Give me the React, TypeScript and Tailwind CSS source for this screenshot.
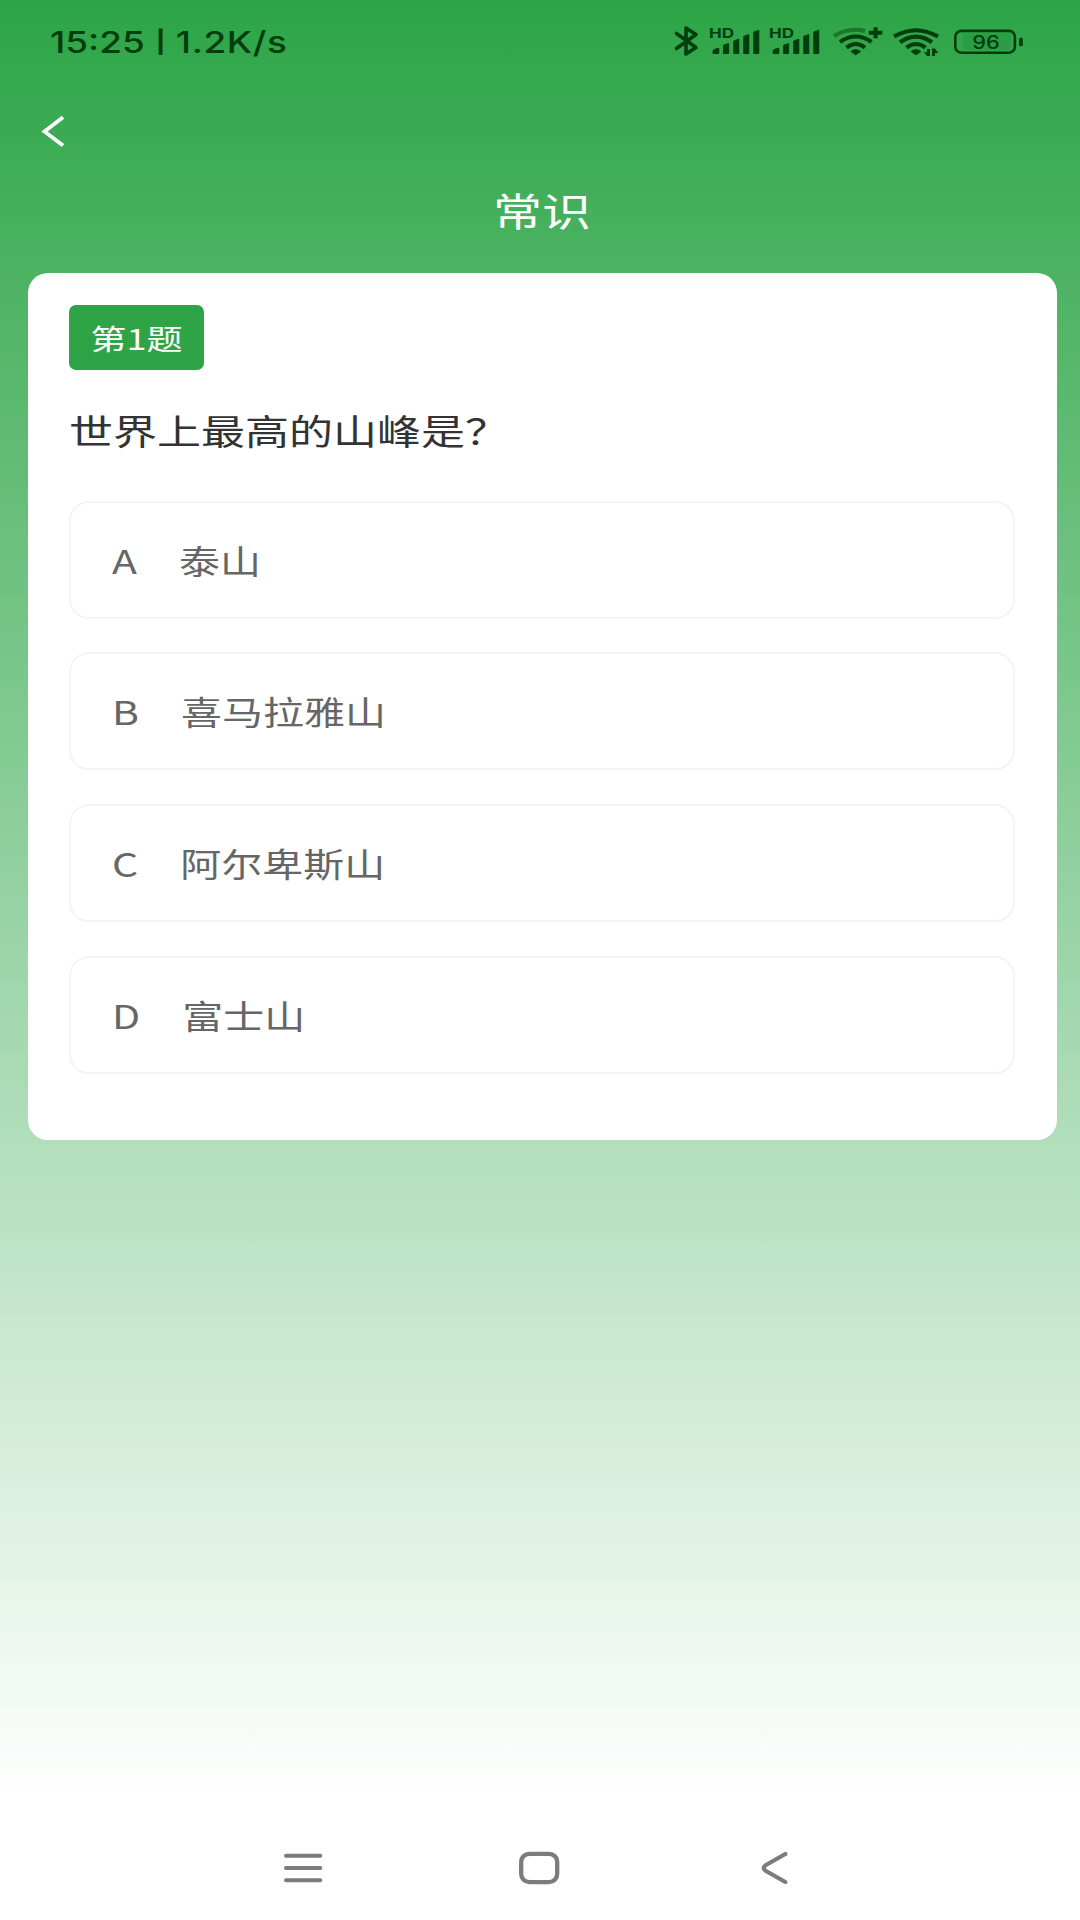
import React from 'react';

const options = [
  { key: 'A', label: '泰山' },
  { key: 'B', label: '喜马拉雅山' },
  { key: 'C', label: '阿尔卑斯山' },
  { key: 'D', label: '富士山' },
];

const BluetoothIcon: React.FC = () => (
  <svg width="32" height="40" viewBox="672 20 32 40" fill="none" stroke="currentColor" strokeWidth="3.6" strokeLinejoin="round" strokeLinecap="round">
    <path d="M676.5 33.5 L696 47.5 L686 54 V28 L696 34.5 L676.5 48.5" />
  </svg>
);

const SignalIcon: React.FC = () => (
  <svg width="60" height="40" viewBox="704 20 60 40" fill="currentColor" stroke="currentColor" strokeWidth="1" strokeLinejoin="round">
    <text x="709" y="38.4" fontSize="12.8" fontWeight="700" stroke="none" textLength="25" lengthAdjust="spacingAndGlyphs" fontFamily="Inter, sans-serif">HD</text>
    <path d="M713 50.8 L714.5 49.3 L718.8 48.3 V53.5 H713 Z" />
    <path d="M723.6 45.2 L728.6 43.6 V53.5 H723.6 Z" />
    <path d="M733.8 41 L738.8 39.2 V53.5 H733.8 Z" />
    <path d="M743.8 36.4 L748.8 34.6 V53.5 H743.8 Z" />
    <path d="M753.8 32 L758.8 30.3 V53.5 H753.8 Z" />
  </svg>
);

const WifiPlusIcon: React.FC = () => (
  <svg width="62" height="40" viewBox="826 20 62 40" fill="none" stroke="currentColor" strokeWidth="4.1">
    <path d="M834 36.3 Q848 26.8 865 31" opacity="0.45" />
    <path d="M840 42 Q855.8 31 871.5 42" />
    <path d="M846.5 47.6 Q855.8 40.4 865 47.6" />
    <path d="M855.8 55 L850.8 51.5 Q855.8 47.6 860.8 51.5 Z" fill="currentColor" strokeWidth="0.6" />
    <path d="M868.8 32.7 H882.3 M875.6 27.2 V38.2" />
  </svg>
);

const WifiDataIcon: React.FC = () => (
  <svg width="60" height="40" viewBox="888 20 60 40" fill="none" stroke="currentColor" strokeWidth="4.1">
    <path d="M894 36.6 Q916 23.8 938 36.6" />
    <path d="M900 42.2 Q916 31 932 42.2" />
    <path d="M906.5 47.6 Q916 40.4 925.5 47.6" />
    <path d="M916 55 L911 51.5 Q916 47.6 921 51.5 Z" fill="currentColor" strokeWidth="0.6" />
    <path d="M930 49 V56 H927 L923.8 52.2 H927 V49 Z M932 56 V48.5 H935 L938.3 53 H935 V56 Z" fill="currentColor" stroke="none" />
  </svg>
);

const BatteryIcon: React.FC = () => (
  <svg width="80" height="40" viewBox="948 20 80 40" fill="none">
    <rect x="963" y="33.5" width="48" height="16.5" rx="2" fill="currentColor" opacity="0.09" />
    <rect x="955.3" y="30.9" width="59.6" height="21.8" rx="6" stroke="currentColor" strokeWidth="2.6" />
    <rect x="1019" y="37.7" width="3.8" height="8.5" rx="1.5" fill="currentColor" />
    <text x="972.3" y="48.8" fontSize="18.5" fontWeight="500" fill="currentColor" textLength="27.5" lengthAdjust="spacingAndGlyphs" fontFamily="Inter, sans-serif">96</text>
  </svg>
);

const StatusBar: React.FC = () => (
  <div className="flex h-[84px] items-start justify-between pt-5 pr-[52px] pl-[50px] text-[#023d0d]">
    <div className="flex origin-left scale-x-[0.97] scale-y-80 font-[Inter] text-[38px] leading-[45px] font-medium whitespace-nowrap">
      <span>15:25</span>
      <span className="mt-[5px] ml-[14px] h-[33px] w-[4px] bg-current" />
      <span className="ml-[14px] tracking-[0.6px]">1.2K/s</span>
    </div>
    <div className="flex">
      <BluetoothIcon />
      <SignalIcon />
      <SignalIcon />
      <div className="w-[2px]" />
      <WifiPlusIcon />
      <WifiDataIcon />
      <BatteryIcon />
    </div>
  </div>
);

const QuestionCard: React.FC = () => (
  <main className="mt-[38px] mr-[23px] ml-7 h-[867px] rounded-[20px] bg-white pt-[32.4px] pr-[42px] pl-[41px]">
    <div className="flex h-[65px] w-[135px] items-center justify-center rounded-[7px] bg-[#2ea447] text-white">
      <span className="-mt-[2px] scale-y-80 text-[36px] leading-none">第1题</span>
    </div>
    <h2 className="mt-[37px] flex h-[46px] origin-center scale-y-80 items-center text-[44px] leading-none text-[#333]">世界上最高的山峰是？</h2>
    <ul className="mt-[47.3px] flex flex-col gap-[33.7px]">
      {options.map((option) => (
        <li key={option.key} className="flex h-[118px] items-center rounded-[20px] border-2 border-[#f4f4f4] pl-[41px] text-[#666]">
          <div className="mt-px flex scale-y-80 gap-[42px] text-[41px] leading-none">
            <span>{option.key}</span>
            <span>{option.label}</span>
          </div>
        </li>
      ))}
    </ul>
  </main>
);

const NavBar: React.FC = () => (
  <nav className="flex h-[104px] items-center justify-center gap-[188px] pr-[2px] text-[#7c7c7c]">
    <svg width="48" height="40" viewBox="279 1848 48 40" stroke="currentColor" strokeWidth="4" strokeLinecap="round">
      <path d="M286 1855.7 H320.3 M286 1868 H320.3 M286 1880.3 H320.3" />
    </svg>
    <svg width="48" height="40" viewBox="515 1848 48 40" fill="none" stroke="currentColor" strokeWidth="4.3">
      <rect x="521.2" y="1853.8" width="36" height="28.3" rx="8" />
    </svg>
    <svg width="48" height="40" viewBox="751 1848 48 40" fill="none" stroke="currentColor" strokeWidth="4.3" strokeLinecap="round" strokeLinejoin="round">
      <path d="M785.3 1854 L766 1865 Q761.5 1868 766 1871 L785.3 1882" />
    </svg>
  </nav>
);

export default function App() {
  return (
    <div className="flex h-[1920px] w-[1080px] flex-col justify-between overflow-hidden bg-white bg-[linear-gradient(180deg,#2ca546_0px,#fff_1800px)] font-['Noto_Sans_CJK_SC',sans-serif]">
      <div>
        <StatusBar />
        <header className="text-white">
          <svg className="mt-[27px] ml-10" width="40" height="40" viewBox="40 111 40 40" fill="none" stroke="currentColor" strokeWidth="3.8">
            <path d="M63 117.3 L44.5 131.5 L63 145.5" />
          </svg>
          <h1 className="mt-[30px] ml-1 flex h-[54px] scale-y-80 items-center justify-center text-[49px] leading-none">常识</h1>
        </header>
        <QuestionCard />
      </div>
      <NavBar />
    </div>
  );
}
